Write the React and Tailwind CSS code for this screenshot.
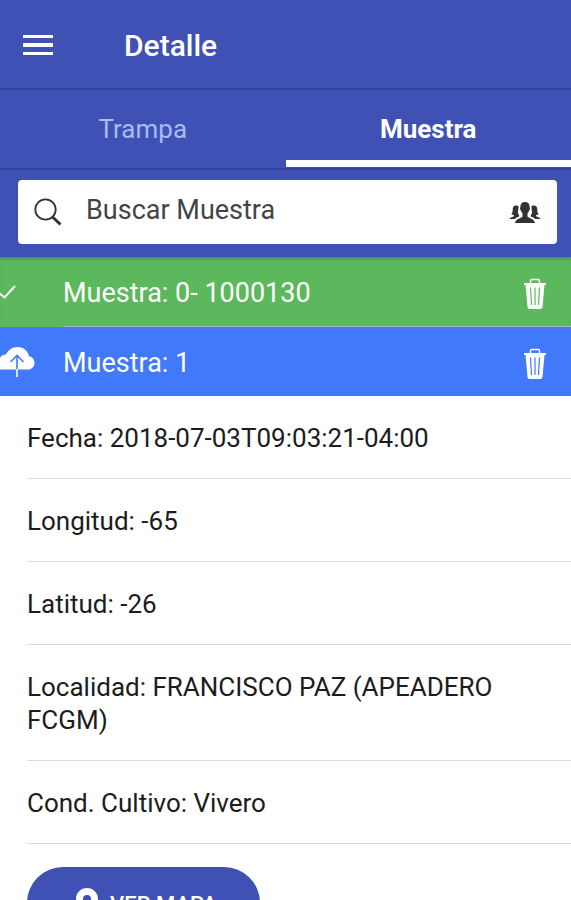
import { useState } from "react";

const samples = [
  { id: 1, label: "Muestra: 0- 1000130", synced: true },
  { id: 2, label: "Muestra: 1", synced: false },
];

const details = [
  "Fecha: 2018-07-03T09:03:21-04:00",
  "Longitud: -65",
  "Latitud: -26",
  "Localidad: FRANCISCO PAZ (APEADERO FCGM)",
  "Cond. Cultivo: Vivero",
];

function MenuIcon() {
  return (
    <svg className="w-[30px] h-[22px]" viewBox="0 0 30 22" fill="currentColor">
      <path d="M0 1h30v3H0zM0 9h30v4H0zM0 18h30v3H0z" />
    </svg>
  );
}

function SearchIcon() {
  return (
    <svg className="w-7 h-7" viewBox="0 0 28 28" fill="none" stroke="#333">
      <circle cx="11.5" cy="11.5" r="10.2" strokeWidth="1.800" />
      <path d="M18.5 19 26.500 26.500" strokeWidth="3" />
    </svg>
  );
}

function PeopleIcon() {
  return (
    <svg className="w-8 h-6" viewBox="0 0 32 24" fill="#333">
      <path d="M16 2c-3 0-4.600 1.800-4.600 4.500 0 .9-.5 1.300-.3 2.400.2.900.7 1.200.9 1.800.3 1.300.9 2 1.500 2.600v3.200c-.6 1.800-6.700 1.800-7.500 6.500h20c-.8-4.700-6.900-4.700-7.500-6.500v-3.200c.6-.6 1.200-1.300 1.500-2.600.2-.6.700-.9.900-1.800.2-1.100-.3-1.500-.3-2.400C20.600 3.800 19 2 16 2z" />
      <path d="M9.700 6.500C8.500 5.200 5 5 4 7.500c-.7 1.800.1 3.600-.8 5.300-.3.600-.6 1-.8 1.500.8.500 1.700.6 2.500.8v1.200C4 17 .8 17.400.4 19h5.500c1-1.200 2.700-1.700 4.200-2.400v-1.500c-.9-1-1.100-2-1.300-3 1-1.800.1-3.500.9-5.600z" />
      <path d="M22.300 6.500C23.500 5.200 27 5 28 7.500c.7 1.800-.1 3.600.8 5.300.3.600.6 1 .8 1.500-.8.500-1.700.6-2.500.8v1.200c.9.700 4.100 1.100 4.500 2.700h-5.500c-1-1.200-2.700-1.700-4.200-2.400v-1.500c.9-1 1.100-2 1.300-3-1-1.800-.1-3.500-.9-5.600z" />
    </svg>
  );
}

function CheckIcon() {
  return (
    <svg className="w-4 h-8" viewBox="0 0 16 32" fill="none" stroke="currentColor" strokeWidth="2">
      <path d="M-1 16 4.500 20.500 15 9" />
    </svg>
  );
}

function CloudIcon() {
  return (
    <svg className="w-9 h-8" viewBox="0 0 36 32" fill="currentColor">
      <path d="M6 22.500H0V11c1-2 3-3.500 6-3.500C8 3.500 12 0 17.500 0 24 0 28 4.300 29 9.300c3.500.6 5.500 3.300 5.500 6.600 0 4-3 6.600-7 6.600z" />
      <path d="M17 22.500V9M10.500 15 17 8.500 23.500 15" fill="none" stroke="#4079fa" strokeWidth="1.600" />
      <path d="M16.200 22h1.600v8h-1.600z" />
    </svg>
  );
}

function TrashIcon({ line }) {
  return (
    <svg className="w-6 h-8" viewBox="0 0 24 32" fill="none">
      <path d="M7.500 5V3q0-1.500 1.500-1.500h6q1.500 0 1.500 1.500v2" stroke="#fff" strokeWidth="1.500" />
      <path d="M1 5h22v2h-1.500l-2 22q-.2 2-2 2h-11q-1.800 0-2-2l-2-22H1z" fill="#fff" />
      <path d="M7.500 9.500 8.500 27M12 9.500V27M16.500 9.500 15.500 27" stroke={line} strokeWidth="1.200" />
    </svg>
  );
}

function PinIcon() {
  return (
    <svg className="w-[22px] h-8" viewBox="0 0 22 32" fill="currentColor" fillRule="evenodd">
      <path d="M11 0C5 0 0 4.700 0 11c0 8 11 20 11 20s11-12 11-20C22 4.700 17 0 11 0zm0 7a4 4 0 1 1 0 8 4 4 0 0 1 0-8z" />
    </svg>
  );
}

export default function App() {
  const [tab, setTab] = useState("Muestra");
  const [search, setSearch] = useState("");

  return (
    <div className="h-screen flex flex-col bg-white font-[Roboto,sans-serif] text-[26px]">
      {/* Header */}
      <header className="shrink-0 h-[90px] flex items-center px-[23px] pt-0.5 bg-[#3f51b5] text-white border-b-2 border-[#34459c]">
        <button type="button" aria-label="Menu">
          <MenuIcon />
        </button>
        <h1 className="ml-[71px] text-[30px] font-medium">Detalle</h1>
      </header>

      {/* Tabs */}
      <div role="tablist" className="shrink-0 h-20 flex bg-[#3f51b5] border-b-2 border-[#34459c]">
        {["Trampa", "Muestra"].map((name) => (
          <button
            key={name}
            type="button"
            role="tab"
            aria-selected={tab === name}
            onClick={() => setTab(name)}
            className={
              tab === name
                ? "flex-1 mb-px border-b-[7px] border-white pt-2 text-white font-bold"
                : "flex-1 mb-px border-b-[7px] border-transparent pt-2 text-[#a5bcf5]"
            }
          >
            {name}
          </button>
        ))}
      </div>

      {/* Search */}
      <div className="shrink-0 bg-[#3f51b5] pt-[10px] pr-[14px] pb-[13px] pl-[18px]">
        <div className="h-16 flex items-center bg-white rounded px-4">
          <SearchIcon />
          <input
            type="text"
            aria-label="Buscar Muestra"
            placeholder="Buscar Muestra"
            value={search}
            onChange={(e) => setSearch(e.target.value)}
            className="flex-1 min-w-0 ml-6 pb-1 text-[27px] text-[#333] placeholder:text-[#444] focus:outline-none"
          />
          <button type="button" aria-label="Usuarios">
            <PeopleIcon />
          </button>
        </div>
      </div>

      <main className="flex-1 min-h-0 overflow-y-auto [scrollbar-width:none]">
        {/* Samples */}
        <ul className="text-white text-[27px]">
          {samples.map((sample) => (
            <li
              key={sample.id}
              className={
                sample.synced
                  ? "flex bg-[#5cb85c] shadow-[inset_0_4px_3px_-2px_#4c924e]"
                  : "flex bg-[#4079fa]"
              }
            >
              <div className="w-[63px] pt-0.5 flex items-center">
                {sample.synced ? <CheckIcon /> : <CloudIcon />}
              </div>
              <div
                className={
                  sample.synced
                    ? "flex-1 h-[70px] flex items-center justify-between pt-1 pr-6 border-b border-[#a0bcc8]"
                    : "flex-1 h-[69px] flex items-center justify-between pt-1 pr-6"
                }
              >
                <span>{sample.label}</span>
                <button type="button" aria-label="Eliminar">
                  <TrashIcon line={sample.synced ? "#5cb85c" : "#4079fa"} />
                </button>
              </div>
            </li>
          ))}
        </ul>

        {/* Details */}
        <ul className="pl-[27px] text-[#1c1c1c]">
          {details.map((text) => (
            <li
              key={text}
              className="pt-[26px] pb-[23px] pr-16 leading-[33px] border-b border-[#dedede]"
            >
              {text}
            </li>
          ))}
        </ul>

        <div className="px-[27px] pt-[23px] pb-6">
          <button
            type="button"
            className="h-[72px] w-[233px] pl-1.5 pt-0.5 flex items-center justify-center gap-3 rounded-full bg-[#3f51b5] text-white text-[22px] font-medium"
          >
            <PinIcon />
            VER MAPA
          </button>
        </div>
      </main>
    </div>
  );
}
